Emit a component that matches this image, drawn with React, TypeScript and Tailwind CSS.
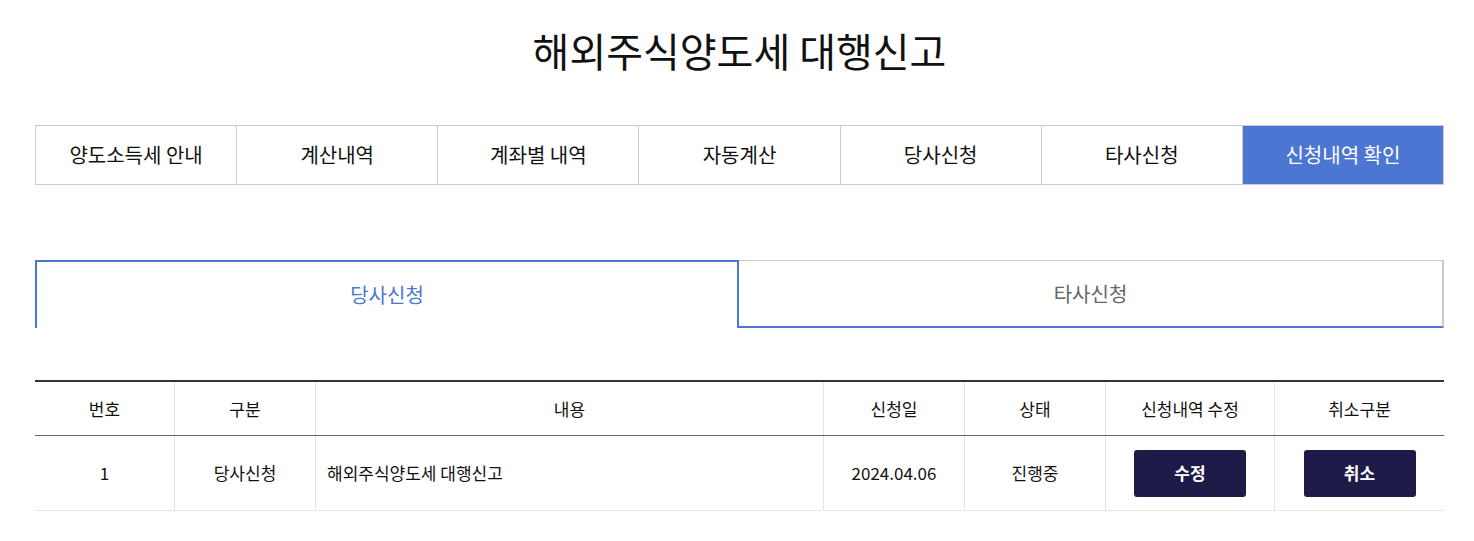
import React from "react";

const navItems = ["양도소득세 안내", "계산내역", "계좌별 내역", "자동계산", "당사신청", "타사신청", "신청내역 확인"];
const cols = [
  { label: "번호", w: "w-[140px]" },
  { label: "구분", w: "w-[141px]" },
  { label: "내용", w: "w-[508px]" },
  { label: "신청일", w: "w-[141px]" },
  { label: "상태", w: "w-[141px]" },
  { label: "신청내역 수정", w: "w-[169px]" },
  { label: "취소구분", w: "w-[169px]" },
];

export default function App() {
  return (
    <div className="w-[1474px] h-[541px] bg-white text-[#111] overflow-hidden" style={{ fontFamily: '"Noto Sans CJK KR", "Noto Sans", sans-serif' }}>
      <div className="w-[1409px] ml-[35px]">
        <h1 className="pt-[20px] h-[80px] text-center text-[40px] leading-[60px] font-normal text-[#111]">해외주식양도세 대행신고</h1>
        <div className="mt-[45px] flex border border-[#ccc] h-[60px]">
          {navItems.map((t, i) => (
            <div
              key={t}
              className={
                i === navItems.length - 1
                  ? "flex-1 flex items-center justify-center bg-[#4b77d2] text-white text-[20px]"
                  : "flex-1 flex items-center justify-center border-r border-[#ccc] text-[20px] text-[#111]"
              }
            >
              {t}
            </div>
          ))}
        </div>
        <div className="mt-[75px] flex h-[68px]">
          <div className="w-[704px] border-2 border-b-0 border-[#4b77d2] flex items-center justify-center text-[20px] text-[#4b77d2]">당사신청</div>
          <div className="flex-1 border-t border-r-2 border-[#ccc] border-b-2 border-b-[#4b77d2] flex items-center justify-center text-[20px] text-[#666]">타사신청</div>
        </div>
        <div className="mt-[52px] border-t-2 border-[#333]">
          <div className="flex h-[54px] border-b border-[#666]">
            {cols.map((c, i) => (
              <div key={c.label} className={`${c.w} flex items-center justify-center text-[17px] text-[#111] ${i < cols.length - 1 ? "border-r border-[#e3e3e3]" : ""}`}>
                {c.label}
              </div>
            ))}
          </div>
          <div className="flex h-[75px] border-b border-[#e6e6e6]">
            <div className="w-[140px] flex items-center justify-center text-[17px] border-r border-[#e3e3e3]">1</div>
            <div className="w-[141px] flex items-center justify-center text-[17px] border-r border-[#e3e3e3]">당사신청</div>
            <div className="w-[508px] flex items-center pl-[11px] text-[17px] border-r border-[#e3e3e3]">해외주식양도세 대행신고</div>
            <div className="w-[141px] flex items-center justify-center text-[17px] border-r border-[#e3e3e3]">2024.04.06</div>
            <div className="w-[141px] flex items-center justify-center text-[17px] border-r border-[#e3e3e3]">진행중</div>
            <div className="w-[169px] flex items-center justify-center border-r border-[#e3e3e3]">
              <button className="w-[112px] h-[47px] rounded-[3px] bg-[#1e1b48] text-white text-[17px] font-bold">수정</button>
            </div>
            <div className="w-[169px] flex items-center justify-center">
              <button className="w-[112px] h-[47px] rounded-[3px] bg-[#1e1b48] text-white text-[17px] font-bold">취소</button>
            </div>
          </div>
        </div>
      </div>
    </div>
  );
}
